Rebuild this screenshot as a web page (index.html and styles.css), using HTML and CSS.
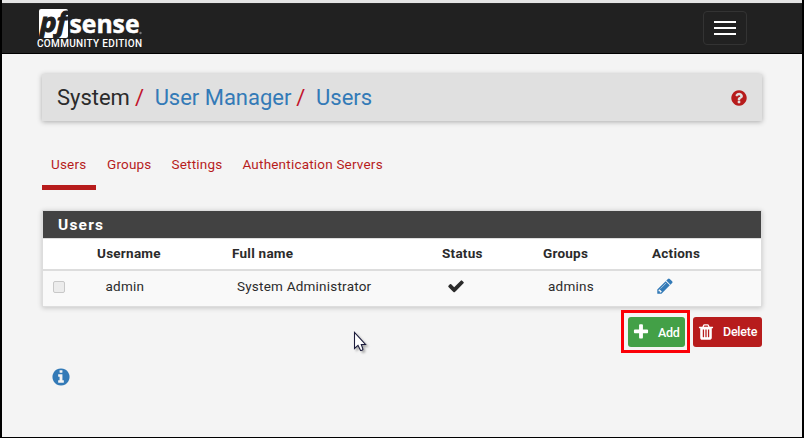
FILE: index.html
```html
<!DOCTYPE html>
<html lang="en">
<head>
<meta charset="utf-8">
<title>System: User Manager: Users</title>
<link rel="stylesheet" href="styles.css">
</head>
<body>
<div class="frame">
  <header class="navbar">
    <div class="brand">
      <svg class="logo" width="106" height="30" viewBox="0 0 106 30" role="img">
        <rect x="2" y="0" width="29" height="29" rx="2" fill="#fff"/>
        <text class="logo-pf" x="3" y="22.500" textLength="27" lengthAdjust="spacingAndGlyphs">pf</text>
        <text class="logo-sense" x="32.500" y="23.500" textLength="70" lengthAdjust="spacingAndGlyphs">sense</text>
        <circle cx="103.500" cy="24" r="1.200" fill="#777"/>
      </svg>
      <span class="edition">COMMUNITY EDITION</span>
    </div>
    <button class="toggle" aria-label="Menu"><i></i><i></i><i></i></button>
  </header>
  <main class="content">
    <div class="crumbs">
      <span class="crumb">System</span><span class="slash">/</span>
      <a class="crumb manager">User Manager</a><span class="slash">/</span>
      <a class="crumb">Users</a>
      <svg class="help" width="18" height="18" viewBox="0 0 1792 1792"><path fill="currentColor" d="M1024 1376v-192q0-14-9-23t-23-9h-192q-14 0-23 9t-9 23v192q0 14 9 23t23 9h192q14 0 23-9t9-23zm256-672q0-88-55.500-163t-138.500-116-170-41q-243 0-371 213-15 24 8 42l132 100q7 6 19 6 16 0 25-12 53-68 86-92 34-24 86-24 48 0 85.500 26t37.500 59q0 38-20 61t-68 45q-63 28-115.500 86.500t-52.500 125.500v36q0 14 9 23t23 9h192q14 0 23-9t9-23q0-19 21.500-49.500t54.500-49.500q32-18 49-28.500t46-35 44.500-48 28-60.500 12.500-81zm384 192q0 209-103 385.500t-279.500 279.500-385.500 103-385.500-103-279.500-279.500-103-385.500 103-385.500 279.500-279.500 385.500-103 385.500 103 279.500 279.500 103 385.500z"/></svg>
    </div>
    <nav class="tabs">
      <a class="tab active">Users</a><a class="tab">Groups</a><a class="tab">Settings</a><a class="tab">Authentication Servers</a>
    </nav>
    <section class="panel">
      <h2 class="panel-title">Users</h2>
      <div class="row head">
        <span></span><span>Username</span><span>Full name</span><span>Status</span><span>Groups</span><span>Actions</span>
      </div>
      <div class="row user">
        <span class="check"></span><span>admin</span><span>System Administrator</span>
        <span><svg class="tick" width="18" height="18" viewBox="0 0 1792 1792"><path fill="currentColor" d="M1671 566q0 40-28 68l-724 724-136 136q-28 28-68 28t-68-28l-136-136-362-362q-28-28-28-68t28-68l136-136q28-28 68-28t68 28l294 295 656-657q28-28 68-28t68 28l136 136q28 28 28 68z"/></svg></span>
        <span>admins</span>
        <span><svg class="pencil" width="18" height="18" viewBox="0 0 1792 1792"><path fill="currentColor" d="M491 1536l91-91-235-235-91 91v107h128v128h107zm523-928q0-22-22-22-10 0-17 7l-542 542q-7 7-7 17 0 22 22 22 10 0 17-7l542-542q7-7 7-17zm-54-192l416 416-832 832h-416v-416zm683 96q0 53-37 90l-166 166-416-416 166-165q36-38 90-38 53 0 91 38l235 234q37 39 37 91z"/></svg></span>
      </div>
    </section>
    <div class="actions">
      <div class="marked">
        <button class="btn add"><svg width="18" height="18" viewBox="0 0 1792 1792"><path fill="currentColor" d="M1600 736v192q0 40-28 68t-68 28h-416v416q0 40-28 68t-68 28h-192q-40 0-68-28t-28-68v-416h-416q-40 0-68-28t-28-68v-192q0-40 28-68t68-28h416v-416q0-40 28-68t68-28h192q40 0 68 28t28 68v416h416q40 0 68 28t28 68z"/></svg><span>Add</span></button>
      </div>
      <button class="btn delete"><svg width="18" height="18" viewBox="0 0 1792 1792"><path fill="currentColor" d="M704 1376v-704q0-14-9-23t-23-9h-64q-14 0-23 9t-9 23v704q0 14 9 23t23 9h64q14 0 23-9t9-23zm256 0v-704q0-14-9-23t-23-9h-64q-14 0-23 9t-9 23v704q0 14 9 23t23 9h64q14 0 23-9t9-23zm256 0v-704q0-14-9-23t-23-9h-64q-14 0-23 9t-9 23v704q0 14 9 23t23 9h64q14 0 23-9t9-23zm-544-992h448l-48-117q-7-9-17-11h-317q-10 2-17 11zm928 32v64q0 14-9 23t-23 9h-96v948q0 83-47 143.500t-113 60.500h-832q-66 0-113-58.500t-47-141.500v-952h-96q-14 0-23-9t-9-23v-64q0-14 9-23t23-9h309l70-167q15-37 54-63t79-26h320q40 0 79 26t54 63l70 167h309q14 0 23 9t9 23z"/></svg><span>Delete</span></button>
    </div>
    <svg class="info" width="20" height="20" viewBox="0 0 1792 1792"><path fill="currentColor" d="M1152 1376v-160q0-14-9-23t-23-9h-96v-512q0-14-9-23t-23-9h-320q-14 0-23 9t-9 23v160q0 14 9 23t23 9h96v320h-96q-14 0-23 9t-9 23v160q0 14 9 23t23 9h448q14 0 23-9t9-23zm-128-896v-160q0-14-9-23t-23-9h-192q-14 0-23 9t-9 23v160q0 14 9 23t23 9h192q14 0 23-9t9-23zm640 416q0 209-103 385.500t-279.500 279.500-385.500 103-385.500-103-279.500-279.500-103-385.500 103-385.500 279.500-279.500 385.500-103 385.500 103 279.500 279.500 103 385.500z"/></svg>
  </main>
  <svg class="cursor" width="18" height="24" viewBox="0 0 18 24"><path d="M1.500 1.500V17.500L5 14.300L7.600 19.500Q9 19.800 10 18.300L8.300 13.500H12.500Z" fill="#fff" stroke="#1c1c3c" stroke-width="1.100"/></svg>
</div>
</body>
</html>
```

FILE: styles.css
```css
* { box-sizing: border-box; }
body { margin: 0; font-family: Roboto, "Liberation Sans", sans-serif; font-size: 13px; color: #2b2b2b; }
.frame { position: relative; height: 438px; background: #f4f4f4; border: solid #000; border-width: 0 2px 1px; }
.navbar { display: flex; justify-content: space-between; height: 54px; padding: 6px 55px 0 35px; background: #212121; border-top: 3px solid #e4e4e4; border-bottom: 1px solid #000; box-shadow: inset 0 1px #2a2a2a; }
.brand { display: flex; flex-direction: column; width: 106px; }
.logo { display: block; overflow: visible; }
.logo-pf { font: italic 700 26px "Open Sans", sans-serif; fill: #212121; stroke: #212121; stroke-width: 1px; }
.logo-sense { font: 700 25px "Open Sans", sans-serif; fill: #fff; stroke: #fff; stroke-width: .5px; }
.edition { font-size: 10px; line-height: 10px; font-weight: 500; letter-spacing: .33px; color: #fff; white-space: nowrap; }
.toggle { display: flex; flex-direction: column; align-items: center; justify-content: center; gap: 4px; width: 44px; height: 34px; margin-top: 2px; padding: 0; background: none; border: 1px solid #333; border-radius: 4px; }
.toggle i { width: 22px; height: 2px; background: #fff; }
.content { padding: 20px 40px 0; }
.crumbs { display: flex; align-items: center; height: 47px; padding: 0 14px 0 15px; background: #e0e0e0; box-shadow: 0 1px 5px rgba(0,0,0,.3); font-size: 22px; letter-spacing: -.02px; }
.crumb { white-space: nowrap; }
a.crumb { color: #337ab7; }
.slash { margin: 0 10.700px 0 5px; color: #c2142c; }
.help { margin-left: auto; color: #b71c1c; }
.tabs { display: flex; margin-top: 29px; height: 40px; color: #b71c1c; font-size: 13.500px; letter-spacing: .2px; }
.tab { padding: 6px 9px 0; margin-right: 2px; line-height: 16px; white-space: nowrap; }
.active { width: 54px; border-bottom: 5px solid #b71c1c; }
.panel { margin-top: 20px; height: 97px; background: #fff; border: 1px solid #ddd; box-shadow: 0 1px 5px rgba(0,0,0,.2); }
.panel-title { height: 27px; margin: 0; padding-left: 15px; background: #424242; color: #fff; font-size: 15.500px; font-weight: 700; line-height: 28px; letter-spacing: 1.200px; }
.row { display: grid; grid-template-columns: 54px 135px 210px 101px 109px 1fr; }
.head { height: 33px; border-top: 1px solid #ddd; border-bottom: 2px solid #ddd; font-size: 13.500px; font-weight: 700; line-height: 29px; letter-spacing: .25px; }
.user { height: 35px; background: #f9f9f9; grid-template-columns: 62.500px 131.500px 210px 101px 109px 1fr; font-size: 13.500px; line-height: 31px; letter-spacing: .22px; }
.check { width: 12px; height: 12px; margin: 10px 0 0 10px; border: 1px solid #c8c8c8; border-radius: 2px; background: #ececec; }
.user svg { display: block; margin-top: 6px; }
.pencil { margin-left: -1px; color: #337ab7; }
.actions { display: flex; justify-content: flex-end; align-items: center; gap: 3px; margin-top: 3px; height: 43px; }
.marked { width: 69px; height: 43px; padding: 4px; border: 3px solid #fb0007; }
.btn { display: flex; align-items: center; height: 30px; padding: 0 3px; border: 0; border-radius: 3px; color: #fff; font: 500 12.500px Roboto, sans-serif; letter-spacing: -.25px; }
.btn svg { flex: none; margin-left: 1px; }
.btn span { margin-left: 8px; }
.add { width: 57px; background: #43a047; }
.delete { width: 69px; background: #b71c1c; }
.info { display: block; margin: 14px 0 0 9px; color: #337ab7; }
.cursor { position: absolute; left: 351px; top: 331px; filter: drop-shadow(2px 2px 1px rgba(0,0,0,.3)); }
```
